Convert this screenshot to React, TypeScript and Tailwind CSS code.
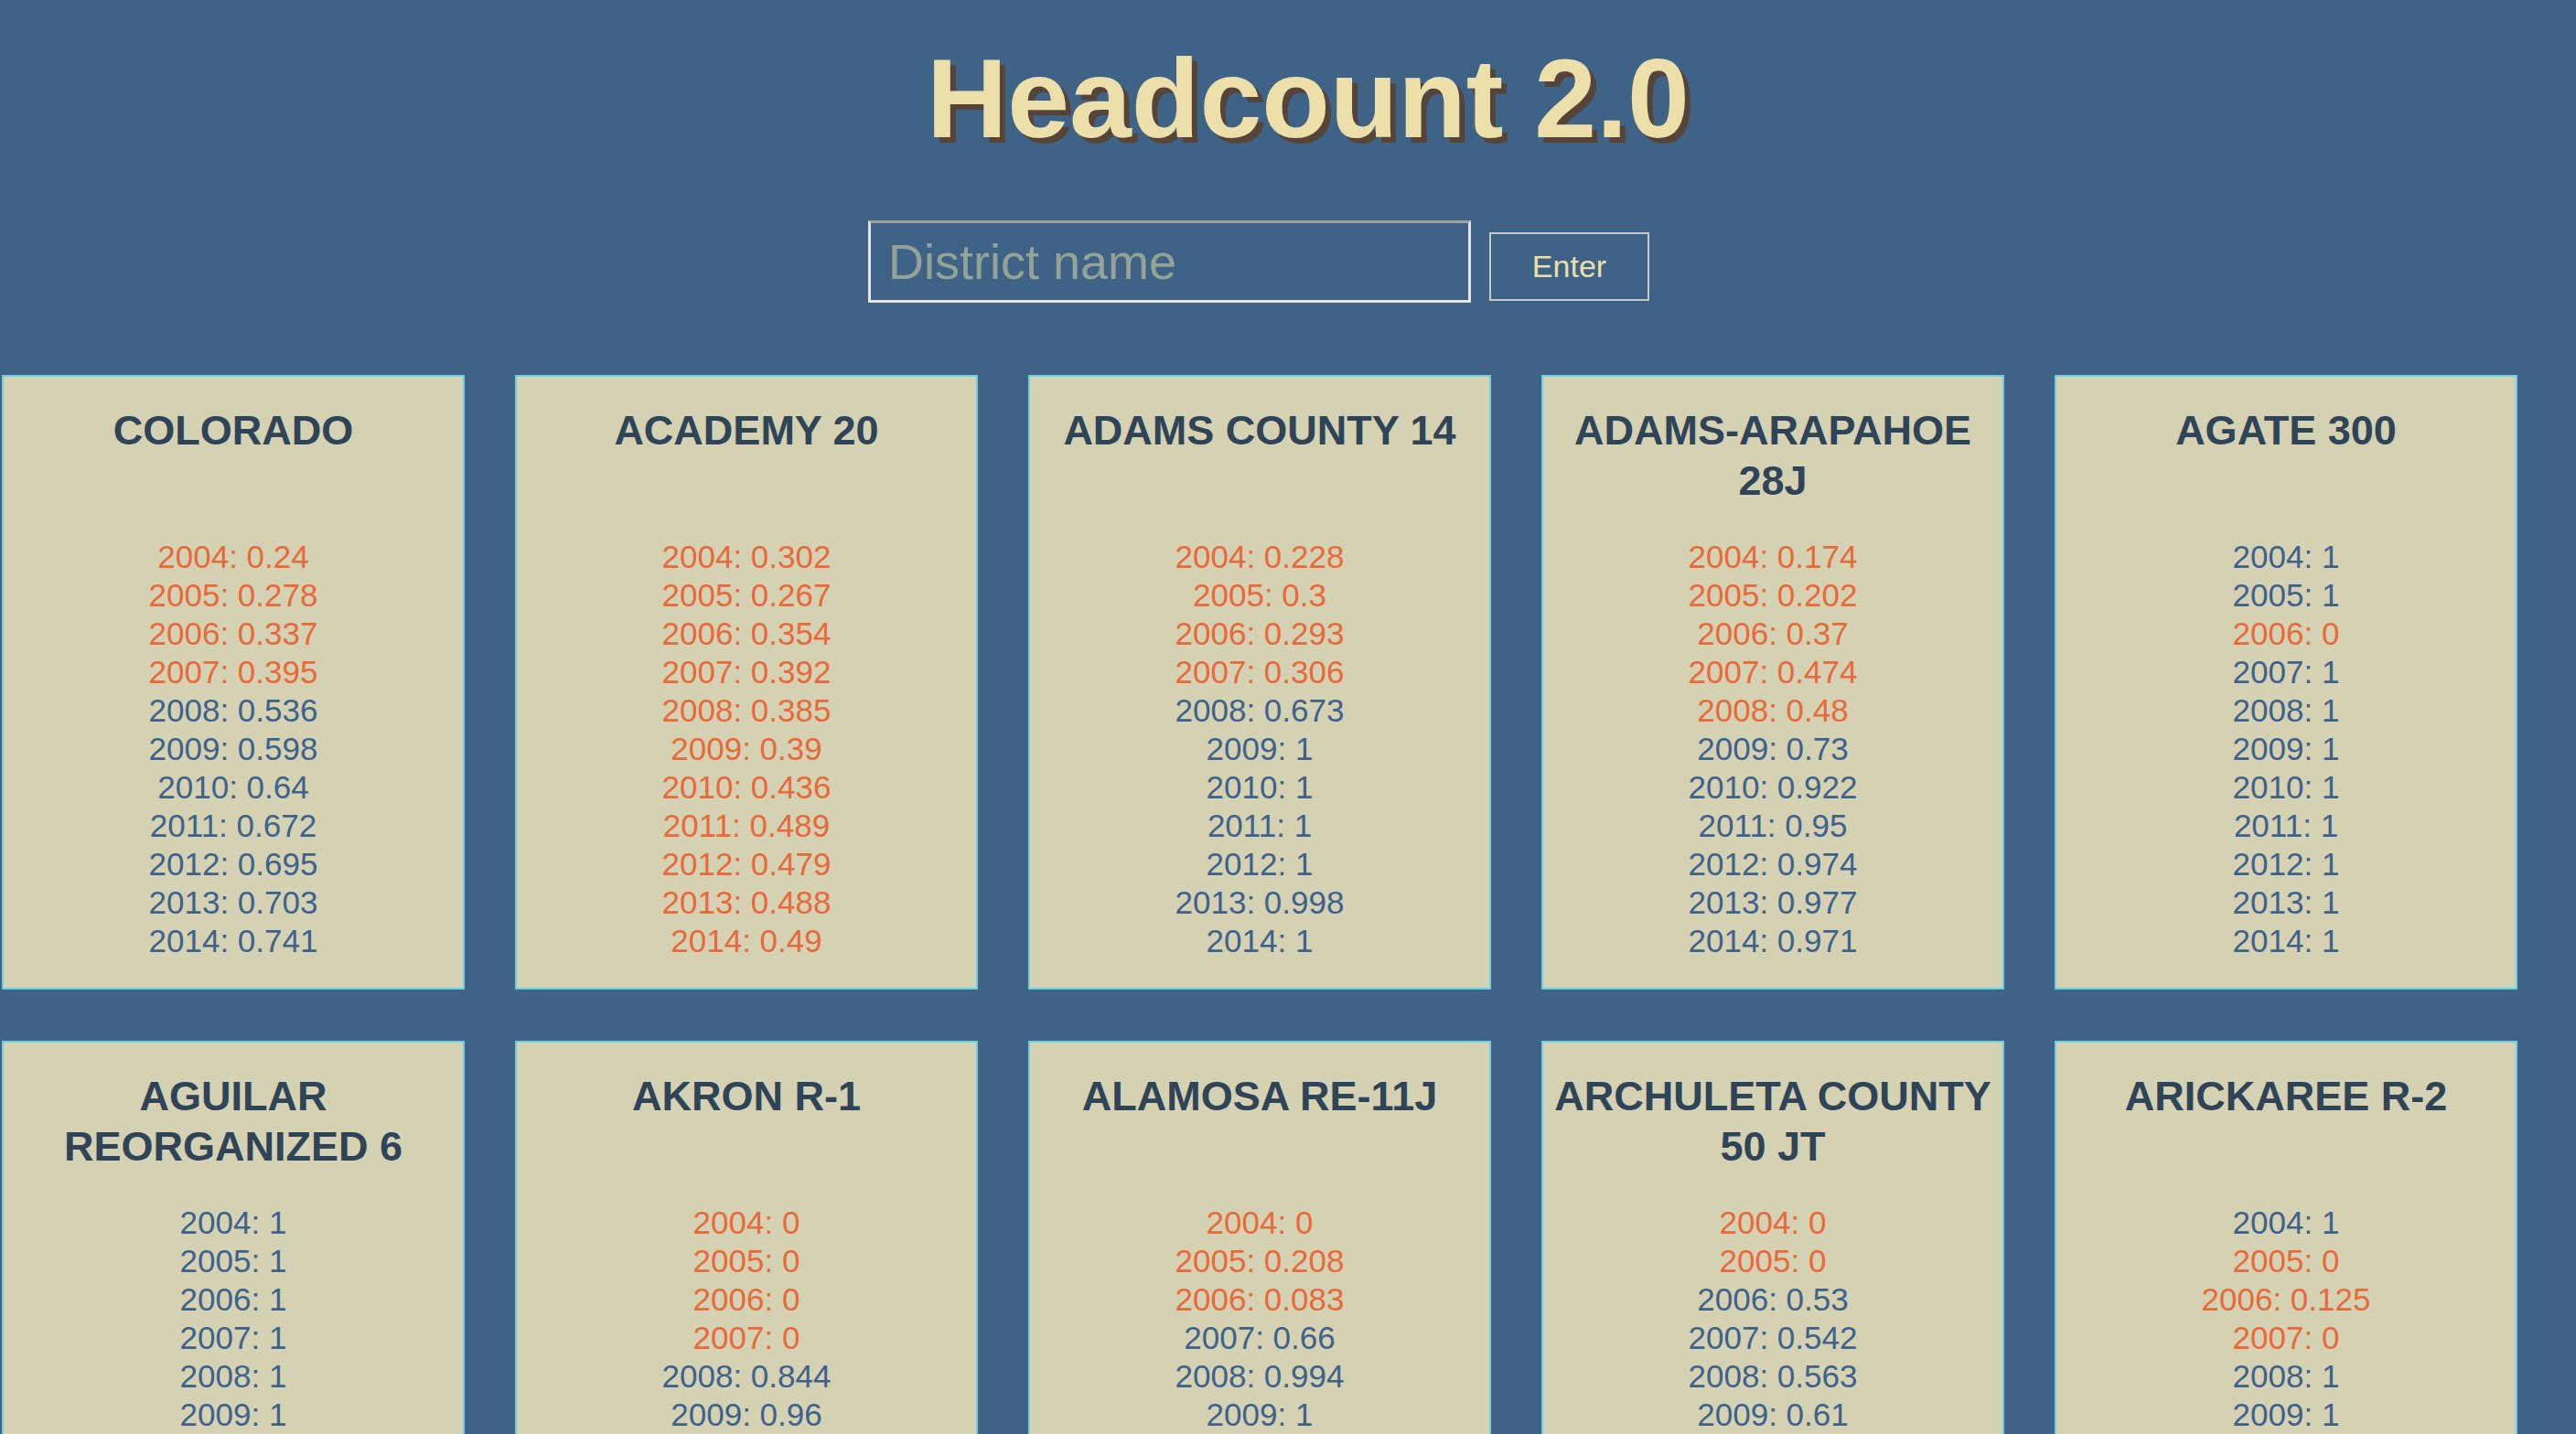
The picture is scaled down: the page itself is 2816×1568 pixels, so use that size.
type District = {
  name: string;
  values: number[];
};

const years = [2004, 2005, 2006, 2007, 2008, 2009, 2010, 2011, 2012, 2013, 2014];

const districts: District[] = [
  { name: "COLORADO", values: [0.24, 0.278, 0.337, 0.395, 0.536, 0.598, 0.64, 0.672, 0.695, 0.703, 0.741] },
  { name: "ACADEMY 20", values: [0.302, 0.267, 0.354, 0.392, 0.385, 0.39, 0.436, 0.489, 0.479, 0.488, 0.49] },
  { name: "ADAMS COUNTY 14", values: [0.228, 0.3, 0.293, 0.306, 0.673, 1, 1, 1, 1, 0.998, 1] },
  { name: "ADAMS-ARAPAHOE 28J", values: [0.174, 0.202, 0.37, 0.474, 0.48, 0.73, 0.922, 0.95, 0.974, 0.977, 0.971] },
  { name: "AGATE 300", values: [1, 1, 0, 1, 1, 1, 1, 1, 1, 1, 1] },
  { name: "AGUILAR REORGANIZED 6", values: [1, 1, 1, 1, 1, 1, 1, 1, 1, 1, 1] },
  { name: "AKRON R-1", values: [0, 0, 0, 0, 0.844, 0.96, 1, 1, 1, 1, 1] },
  { name: "ALAMOSA RE-11J", values: [0, 0.208, 0.083, 0.66, 0.994, 1, 1, 1, 1, 1, 1] },
  { name: "ARCHULETA COUNTY 50 JT", values: [0, 0, 0.53, 0.542, 0.563, 0.61, 0.655, 0.727, 0.9, 1, 1] },
  { name: "ARICKAREE R-2", values: [1, 0, 0.125, 0, 1, 1, 1, 1, 1, 1, 1] },
];

function DistrictCard({ district }: { district: District }) {
  return (
    <div className="w-[506px] border-2 border-[#70d0dc] bg-[#d5d1b3] pt-[31px] pb-[30px] text-center">
      <h2 className="h-[145px] text-[45px] leading-[55px] font-bold text-[#2f4457]">{district.name}</h2>
      <ul>
        {years.map((year, i) => {
          const value = district.values[i];
          return (
            <li
              key={year}
              className={
                value < 0.5
                  ? "text-[35px] leading-[42px] text-[#e8693a]"
                  : "text-[35px] leading-[42px] text-[#3e628b]"
              }
            >
              {year}: {value}
            </li>
          );
        })}
      </ul>
    </div>
  );
}

export default function App() {
  return (
    <div className="min-h-screen bg-[#3e6386] font-['Liberation_Sans',Arial,sans-serif]">
      <h1 className="pt-[47px] pl-[44px] text-center text-[122px] leading-none font-bold text-[#ecdfaa] [text-shadow:6px_6px_0_#574438]">
        Headcount 2.0
      </h1>

      <div className="mt-[72px] flex items-end justify-center gap-5 pr-[64px]">
        <input
          type="text"
          placeholder="District name"
          className="h-[90px] w-[659px] border-[3px] border-[#e2e2e2] border-t-[#a0a0a0] bg-transparent px-[19px] text-[54px] text-[#ecdfaa] placeholder-[#95a396] focus:outline-none"
        />
        <button className="mb-[2px] h-[75px] w-[175px] border-2 border-[#c8c8c8] text-[34px] text-[#ecdfaa]">
          Enter
        </button>
      </div>

      <div className="mt-[79px] flex flex-wrap gap-x-[55px] gap-y-[56px] pl-[2px] pb-[56px]">
        {districts.map((d) => (
          <DistrictCard key={d.name} district={d} />
        ))}
      </div>
    </div>
  );
}
